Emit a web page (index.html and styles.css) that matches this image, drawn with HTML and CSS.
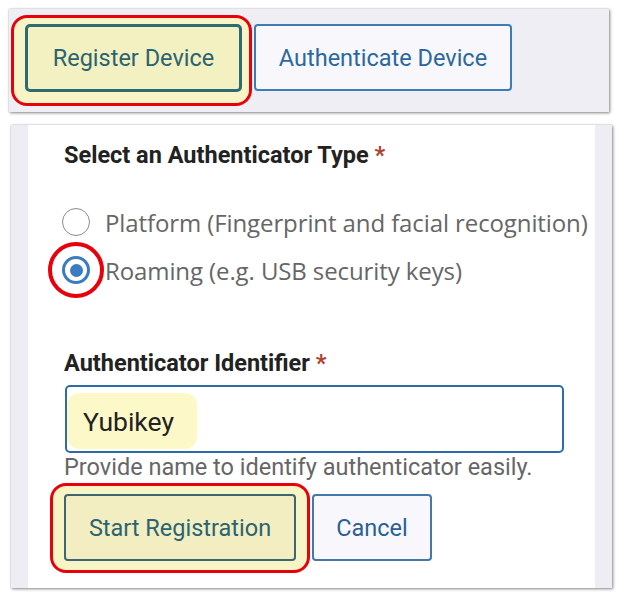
FILE: index.html
```html
<!DOCTYPE html>
<html lang="en">
<head>
<meta charset="utf-8">
<title>Authenticator</title>
<link rel="stylesheet" href="styles.css">
</head>
<body>
<div class="toolbar">
  <div class="mark mark-top">
    <button class="btn btn-primary btn-register">Register Device</button>
  </div>
  <button class="btn btn-secondary btn-auth">Authenticate Device</button>
</div>

<div class="panel">
  <div class="gutter"></div>
  <div class="content">
    <div class="label label-type">Select an Authenticator Type <span class="req">*</span></div>
    <div class="radio-row row-platform">
      <span class="radio"></span>
      <span class="radio-text">Platform (Fingerprint and facial recognition)</span>
    </div>
    <div class="radio-row">
      <span class="radio radio-on"><span class="dot"></span><span class="ring-mark"></span></span>
      <span class="radio-text">Roaming (e.g. USB security keys)</span>
    </div>
    <div class="label label-id">Authenticator Identifier <span class="req">*</span></div>
    <div class="input">
      <span class="value">Yubikey</span>
    </div>
    <div class="help">Provide name to identify authenticator easily.</div>
    <div class="actions">
      <div class="mark mark-bottom">
        <button class="btn btn-primary btn-start">Start Registration</button>
      </div>
      <button class="btn btn-secondary btn-cancel">Cancel</button>
    </div>
  </div>
  <div class="gutter"></div>
</div>
</body>
</html>
```

FILE: styles.css
```css
* { box-sizing: border-box; }
html, body { margin: 0; padding: 0; background: #ffffff; }
body {
  width: 621px;
  height: 598px;
  overflow: hidden;
  font-family: Roboto, "Liberation Sans", sans-serif;
}

.toolbar {
  margin: 9px 0 0 9px;
  width: 600px;
  height: 103px;
  background: #efeef4;
  box-shadow: 1px 1px 3px rgba(0,0,0,0.45), 0 0 1px rgba(0,0,0,0.3);
  display: flex;
  align-items: flex-start;
  gap: 2px;
  padding: 6px 0 0 2px;
}

.mark {
  border: 3px solid #e8000b;
  background: #f7f4c6;
}
.mark-top {
  border-radius: 16px;
  padding: 6px 7px 11px 11px;
}
.mark-bottom {
  border-radius: 16px;
  padding: 8px 11px 9px 11px;
}

.btn {
  font-family: Roboto, "Liberation Sans", sans-serif;
  font-size: 23.5px;
  display: flex;
  align-items: center;
  justify-content: center;
  padding: 0;
  margin: 0;
  cursor: pointer;
}
.btn-primary {
  background: #f3f0c2;
  color: #2b6470;
}
.btn-secondary {
  background: #f8f8fc;
  color: #2c68a0;
  border: 2px solid #3d7db5;
  border-radius: 4px;
}
.btn-register {
  width: 217px;
  height: 68px;
  border: 3px solid #2e6a73;
  border-radius: 5px;
}
.btn-auth {
  width: 258px;
  height: 67px;
  margin-top: 9px;
}

.panel {
  margin: 13px 0 0 11px;
  width: 601px;
  height: 463px;
  display: grid;
  grid-template-columns: 17px 1fr 17px;
  box-shadow: 1px 1px 3px rgba(0,0,0,0.45), 0 0 1px rgba(0,0,0,0.3);
  background: #ffffff;
}
.gutter { background: #eeedf3; }

.content {
  padding: 18px 0 0 36px;
  display: flex;
  flex-direction: column;
  align-items: flex-start;
}

.label {
  font-weight: 700;
  font-size: 23.5px;
  line-height: 24px;
  color: #222222;
  white-space: nowrap;
}
.req { color: #b0402f; font-weight: 700; }

.row-platform { margin-top: 31px; }
.radio-row {
  height: 48px;
  display: flex;
  align-items: center;
  gap: 15px;
  margin-left: -2px;
  white-space: nowrap;
}
.radio {
  position: relative;
  width: 28px;
  height: 28px;
  border-radius: 50%;
  border: 1.5px solid #8b8b8b;
  background: #fff;
  flex: none;
}
.radio-on {
  border: 3px solid #3a7cbf;
  display: flex;
  align-items: center;
  justify-content: center;
}
.dot {
  width: 13px;
  height: 13px;
  border-radius: 50%;
  background: #3a7cbf;
}
.ring-mark {
  position: absolute;
  left: -17px;
  top: -17px;
  width: 56px;
  height: 56px;
  border-radius: 50%;
  border: 4px solid #e8000b;
}
.radio-text {
  font-family: "Open Sans", "Noto Sans", sans-serif;
  font-size: 24px;
  color: #666666;
  letter-spacing: -0.1px;
}

.label-id { margin-top: 57px; }

.input {
  margin-top: 10px;
  margin-left: 1px;
  width: 499px;
  height: 68px;
  border: 2px solid #2e6ca6;
  border-radius: 5px;
  padding: 6px 0 0 0;
  background: #fff;
}
.value {
  display: flex;
  align-items: center;
  width: 130px;
  height: 56px;
  padding-left: 16px;
  border-radius: 12px;
  background: #fdf8c8;
  font-size: 26.5px;
  color: #222222;
}

.help {
  margin-top: 2px;
  font-size: 23.5px;
  line-height: 24px;
  color: #666666;
  white-space: nowrap;
}

.actions {
  margin-top: 4px;
  margin-left: -14px;
  display: flex;
  align-items: flex-start;
  gap: 2px;
}
.btn-start {
  width: 232px;
  height: 67px;
  border: 2px solid #3c6670;
  border-radius: 4px;
  background: #f2eec2;
}
.btn-cancel {
  width: 120px;
  height: 67px;
  margin-top: 11px;
  color: #2b5f96;
  border-color: #4577a8;
}
```
